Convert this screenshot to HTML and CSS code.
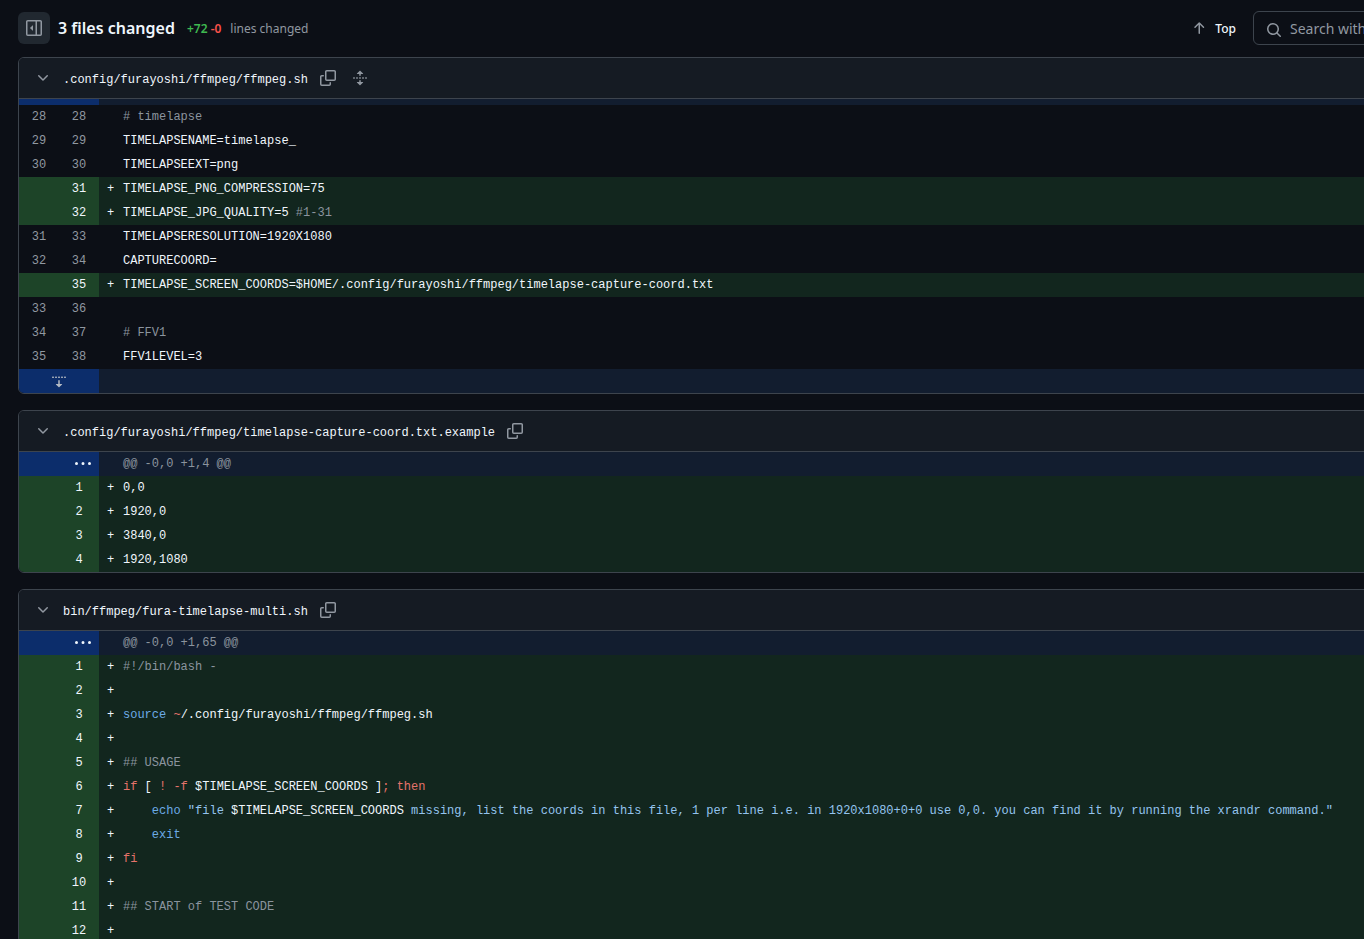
FILE: index.html
```html
<!DOCTYPE html>
<html lang="en">
<head>
<meta charset="utf-8">
<title>3 files changed</title>
<link rel="stylesheet" href="styles.css">
</head>
<body>
<svg class="defs" width="0" height="0" aria-hidden="true">
  <symbol id="i-copy" viewBox="0 0 16 16"><path d="M0 6.75C0 5.784.784 5 1.75 5h1.5a.75.75 0 0 1 0 1.5h-1.5a.25.25 0 0 0-.25.25v7.5c0 .138.112.25.25.25h7.5a.25.25 0 0 0 .25-.25v-1.5a.75.75 0 0 1 1.5 0v1.5A1.75 1.75 0 0 1 9.25 16h-7.5A1.75 1.75 0 0 1 0 14.25Z"/><path d="M5 1.75C5 .784 5.784 0 6.75 0h7.5C15.216 0 16 .784 16 1.75v7.5A1.75 1.75 0 0 1 14.25 11h-7.5A1.75 1.75 0 0 1 5 9.25Zm1.75-.25a.25.25 0 0 0-.25.25v7.5c0 .138.112.25.25.25h7.5a.25.25 0 0 0 .25-.25v-7.5a.25.25 0 0 0-.25-.25Z"/></symbol>
  <symbol id="i-chev" viewBox="0 0 16 16"><path d="M12.78 5.22a.749.749 0 0 1 0 1.06l-4.25 4.25a.749.749 0 0 1-1.06 0L3.22 6.28a.749.749 0 1 1 1.06-1.06L8 8.939l3.72-3.719a.749.749 0 0 1 1.06 0Z"/></symbol>
  <symbol id="i-unfold" viewBox="0 0 16 16"><path d="M8.177.677l2.896 2.896a.25.25 0 0 1-.177.427H8.75v1.25a.75.75 0 0 1-1.5 0V4H5.104a.25.25 0 0 1-.177-.427L7.823.677a.25.25 0 0 1 .354 0ZM7.25 10.75a.75.75 0 0 1 1.5 0V12h2.146a.25.25 0 0 1 .177.427l-2.896 2.896a.25.25 0 0 1-.354 0l-2.896-2.896A.25.25 0 0 1 5.104 12H7.25v-1.25Zm-5-2a.75.75 0 0 0 0-1.5h-.5a.75.75 0 0 0 0 1.5h.5ZM6 8a.75.75 0 0 1-.75.75h-.5a.75.75 0 0 1 0-1.5h.5A.75.75 0 0 1 6 8Zm2.25.75a.75.75 0 0 0 0-1.5h-.5a.75.75 0 0 0 0 1.5h.5ZM12 8a.75.75 0 0 1-.75.75h-.5a.75.75 0 0 1 0-1.5h.5A.75.75 0 0 1 12 8Zm2.25.75a.75.75 0 0 0 0-1.5h-.5a.75.75 0 0 0 0 1.5h.5Z"/></symbol>
  <symbol id="i-fold" viewBox="0 0 16 16"><path d="M8.177 14.323l2.896-2.896a.25.25 0 0 0-.177-.427H8.75V7.764a.75.75 0 1 0-1.5 0V11H5.104a.25.25 0 0 0-.177.427l2.896 2.896a.25.25 0 0 0 .354 0ZM2.25 5a.75.75 0 0 0 0-1.5h-.5a.75.75 0 0 0 0 1.5h.5ZM6 4.25a.75.75 0 0 1-.75.75h-.5a.75.75 0 0 1 0-1.5h.5a.75.75 0 0 1 .75.75ZM8.25 5a.75.75 0 0 0 0-1.5h-.5a.75.75 0 0 0 0 1.5h.5ZM12 4.25a.75.75 0 0 1-.75.75h-.5a.75.75 0 0 1 0-1.5h.5a.75.75 0 0 1 .75.75Zm2.25.75a.75.75 0 0 0 0-1.5h-.5a.75.75 0 0 0 0 1.5h.5Z"/></symbol>
  <symbol id="i-dots" viewBox="0 0 16 16"><path d="M8 9a1.5 1.5 0 1 0 0-3 1.5 1.5 0 0 0 0 3ZM1.5 9a1.5 1.5 0 1 0 0-3 1.5 1.5 0 0 0 0 3Zm13 0a1.5 1.5 0 1 0 0-3 1.5 1.5 0 0 0 0 3Z"/></symbol>
</svg>
<div class="page">
  <header class="topbar">
    <div class="topbar-left">
      <button class="panel-btn" type="button" aria-label="Collapse file tree">
        <svg class="icon" viewBox="0 0 16 16"><path d="M4.177 7.823l2.396-2.396A.25.25 0 0 1 7 5.604v4.792a.25.25 0 0 1-.427.177L4.177 8.177a.25.25 0 0 1 0-.354Z"/><path d="M0 1.75C0 .784.784 0 1.75 0h12.5C15.216 0 16 .784 16 1.75v12.5A1.75 1.75 0 0 1 14.25 16H1.75A1.75 1.75 0 0 1 0 14.25Zm1.75-.25a.25.25 0 0 0-.25.25v12.5c0 .138.112.25.25.25H9.5v-13Zm12.5 13a.25.25 0 0 0 .25-.25V1.75a.25.25 0 0 0-.25-.25H11v13Z"/></svg>
      </button>
      <h1 class="title">3 files changed</h1>
      <span class="stat"><span class="plus">+72</span> <span class="minus">-0</span></span>
      <span class="stat-label">lines changed</span>
    </div>
    <div class="topbar-right">
      <a class="top-link"><svg class="icon" viewBox="0 0 16 16"><path d="M3.47 7.78a.75.75 0 0 1 0-1.06l4.25-4.25a.75.75 0 0 1 1.06 0l4.25 4.25a.751.751 0 0 1-.018 1.042.751.751 0 0 1-1.042.018L9 4.81v8.44a.75.75 0 0 1-1.5 0V4.81L4.53 7.78a.75.75 0 0 1-1.06 0Z"/></svg><span>Top</span></a>
      <div class="search"><svg class="icon search-icon" viewBox="0 0 16 16"><path d="M10.68 11.74a6 6 0 0 1-7.922-8.982 6 6 0 0 1 8.982 7.922l3.04 3.04a.749.749 0 0 1-.326 1.275.749.749 0 0 1-.734-.215ZM11.5 7a4.499 4.499 0 1 0-8.997 0A4.499 4.499 0 0 0 11.5 7Z"/></svg><span>Search within code</span></div>
    </div>
  </header>

  <section class="file">
    <div class="file-head">
      <svg class="icon chev"><use href="#i-chev"/></svg>
      <span class="path">.config/furayoshi/ffmpeg/ffmpeg.sh</span>
      <svg class="icon copy"><use href="#i-copy"/></svg>
      <svg class="icon unfold"><use href="#i-unfold"/></svg>
    </div>
    <div class="row hunk thin"><span class="gut"></span><span class="code"></span></div>
    <div class="row"><span class="gut"><i>28</i><i>28</i></span><span class="code"><b></b><span class="c"># timelapse</span></span></div>
    <div class="row"><span class="gut"><i>29</i><i>29</i></span><span class="code"><b></b>TIMELAPSENAME=timelapse_</span></div>
    <div class="row"><span class="gut"><i>30</i><i>30</i></span><span class="code"><b></b>TIMELAPSEEXT=png</span></div>
    <div class="row add"><span class="gut"><i></i><i>31</i></span><span class="code"><b>+</b>TIMELAPSE_PNG_COMPRESSION=75</span></div>
    <div class="row add"><span class="gut"><i></i><i>32</i></span><span class="code"><b>+</b>TIMELAPSE_JPG_QUALITY=5 <span class="c">#1-31</span></span></div>
    <div class="row"><span class="gut"><i>31</i><i>33</i></span><span class="code"><b></b>TIMELAPSERESOLUTION=1920X1080</span></div>
    <div class="row"><span class="gut"><i>32</i><i>34</i></span><span class="code"><b></b>CAPTURECOORD=</span></div>
    <div class="row add"><span class="gut"><i></i><i>35</i></span><span class="code"><b>+</b>TIMELAPSE_SCREEN_COORDS=$HOME/.config/furayoshi/ffmpeg/timelapse-capture-coord.txt</span></div>
    <div class="row"><span class="gut"><i>33</i><i>36</i></span><span class="code"><b></b></span></div>
    <div class="row"><span class="gut"><i>34</i><i>37</i></span><span class="code"><b></b><span class="c"># FFV1</span></span></div>
    <div class="row"><span class="gut"><i>35</i><i>38</i></span><span class="code"><b></b>FFV1LEVEL=3</span></div>
    <div class="row hunk"><span class="gut center"><svg class="icon fold"><use href="#i-fold"/></svg></span><span class="code"></span></div>
  </section>

  <section class="file">
    <div class="file-head">
      <svg class="icon chev"><use href="#i-chev"/></svg>
      <span class="path">.config/furayoshi/ffmpeg/timelapse-capture-coord.txt.example</span>
      <svg class="icon copy"><use href="#i-copy"/></svg>
    </div>
    <div class="row hunk"><span class="gut end"><svg class="dots"><use href="#i-dots"/></svg></span><span class="code"><b></b><span class="c">@@ -0,0 +1,4 @@</span></span></div>
    <div class="row add"><span class="gut"><i></i><i>1</i></span><span class="code"><b>+</b>0,0</span></div>
    <div class="row add"><span class="gut"><i></i><i>2</i></span><span class="code"><b>+</b>1920,0</span></div>
    <div class="row add"><span class="gut"><i></i><i>3</i></span><span class="code"><b>+</b>3840,0</span></div>
    <div class="row add"><span class="gut"><i></i><i>4</i></span><span class="code"><b>+</b>1920,1080</span></div>
  </section>

  <section class="file">
    <div class="file-head">
      <svg class="icon chev"><use href="#i-chev"/></svg>
      <span class="path">bin/ffmpeg/fura-timelapse-multi.sh</span>
      <svg class="icon copy"><use href="#i-copy"/></svg>
    </div>
    <div class="row hunk"><span class="gut end"><svg class="dots"><use href="#i-dots"/></svg></span><span class="code"><b></b><span class="c">@@ -0,0 +1,65 @@</span></span></div>
    <div class="row add"><span class="gut"><i></i><i>1</i></span><span class="code"><b>+</b><span class="c">#!/bin/bash -</span></span></div>
    <div class="row add"><span class="gut"><i></i><i>2</i></span><span class="code"><b>+</b></span></div>
    <div class="row add"><span class="gut"><i></i><i>3</i></span><span class="code"><b>+</b><span class="f">source</span> <span class="k">~</span>/.config/furayoshi/ffmpeg/ffmpeg.sh</span></div>
    <div class="row add"><span class="gut"><i></i><i>4</i></span><span class="code"><b>+</b></span></div>
    <div class="row add"><span class="gut"><i></i><i>5</i></span><span class="code"><b>+</b><span class="c">## USAGE</span></span></div>
    <div class="row add"><span class="gut"><i></i><i>6</i></span><span class="code"><b>+</b><span class="k">if</span> [ <span class="k">!</span> <span class="k">-f</span> $TIMELAPSE_SCREEN_COORDS ]<span class="k">;</span> <span class="k">then</span></span></div>
    <div class="row add"><span class="gut"><i></i><i>7</i></span><span class="code"><b>+</b>    <span class="f">echo</span> <span class="s">"file </span>$TIMELAPSE_SCREEN_COORDS<span class="s"> missing, list the coords in this file, 1 per line i.e. in 1920x1080+0+0 use 0,0. you can find it by running the xrandr command."</span></span></div>
    <div class="row add"><span class="gut"><i></i><i>8</i></span><span class="code"><b>+</b>    <span class="f">exit</span></span></div>
    <div class="row add"><span class="gut"><i></i><i>9</i></span><span class="code"><b>+</b><span class="k">fi</span></span></div>
    <div class="row add"><span class="gut"><i></i><i>10</i></span><span class="code"><b>+</b></span></div>
    <div class="row add"><span class="gut"><i></i><i>11</i></span><span class="code"><b>+</b><span class="c">## START of TEST CODE</span></span></div>
    <div class="row add"><span class="gut"><i></i><i>12</i></span><span class="code"><b>+</b></span></div>
  </section>
</div>
</body>
</html>
```
FILE: styles.css
```css
* { box-sizing: border-box; }
html, body { margin: 0; height: 100%; overflow: hidden; }
body { background: #0c0f16; color: #f0f6fc; font-family: "Noto Sans", sans-serif; }
.defs { display: block; height: 0; }
.page { width: 1400px; margin-left: 18px; }
.icon { width: 16px; height: 16px; fill: #9198a1; flex: none; display: block; }

.topbar { height: 57px; display: flex; align-items: flex-start; justify-content: space-between; }
.topbar-left { display: flex; align-items: center; height: 32px; margin-top: 12px; }
.panel-btn { width: 32px; height: 32px; padding: 0; border: 0; border-radius: 6px; background: #212830; display: flex; align-items: center; justify-content: center; }
.title { margin: 0 0 0 8px; font-size: 16px; font-weight: 600; line-height: 24px; color: #f0f6fc; }
.stat { margin-left: 12px; padding-top: 2px; font-size: 12px; font-weight: 600; line-height: 18px; }
.plus { color: #3fb950; }
.minus { color: #f85149; }
.stat-label { margin-left: 9px; padding-top: 2px; font-size: 12px; line-height: 18px; color: #9198a1; }
.topbar-right { display: flex; align-items: center; margin-top: 11px; }
.top-link { display: flex; align-items: center; gap: 8px; font-size: 12px; font-weight: 500; color: #f0f6fc; margin-right: 17px; height: 32px; }
.search { width: 165px; height: 34px; border: 1px solid #3d444d; border-radius: 6px; display: flex; align-items: center; gap: 8px; padding-left: 12px; font-size: 14px; color: #9198a1; white-space: nowrap; }
.search-icon { margin-top: 4px; }

.file { border: 1px solid #3d444d; border-radius: 6px; overflow: hidden; margin-bottom: 16px; }
.file-head { height: 41px; background: #151b23; border-bottom: 1px solid #3d444d; display: flex; align-items: center; font-family: "Liberation Mono", monospace; font-size: 12px; padding-left: 16px; }
.path { margin-left: 12px; padding-top: 4px; color: #f0f6fc; white-space: pre; }
.copy { margin-left: 12px; }
.unfold { margin-left: 16px; }

.row { display: flex; height: 24px; font-family: "Liberation Mono", monospace; font-size: 12px; line-height: 24px; white-space: pre; }
.gut { width: 80px; flex: none; display: flex; color: #9198a1; }
.gut i { width: 40px; font-style: normal; text-align: center; }
.code { flex: 1; padding-left: 8px; display: block; color: #f0f6fc; }
.code b { display: inline-block; width: 16px; font-weight: 400; }

.add .gut { background: #1d4428; color: #f0f6fc; }
.add .code { background: #12261e; }
.hunk .gut { background: #0c2d6b; }
.hunk .code { background: #121d2f; }
.thin { height: 6px; }
.center { align-items: center; justify-content: center; }
.fold { fill: #b4bac4; }
.end { align-items: center; justify-content: flex-end; padding-right: 8px; }
.dots { width: 16px; height: 16px; fill: #f0f6fc; display: block; }

.c { color: #8b949e; }
.k { color: #e5736b; }
.f { color: #6cabe6; }
.s { color: #94c4ee; }
```
